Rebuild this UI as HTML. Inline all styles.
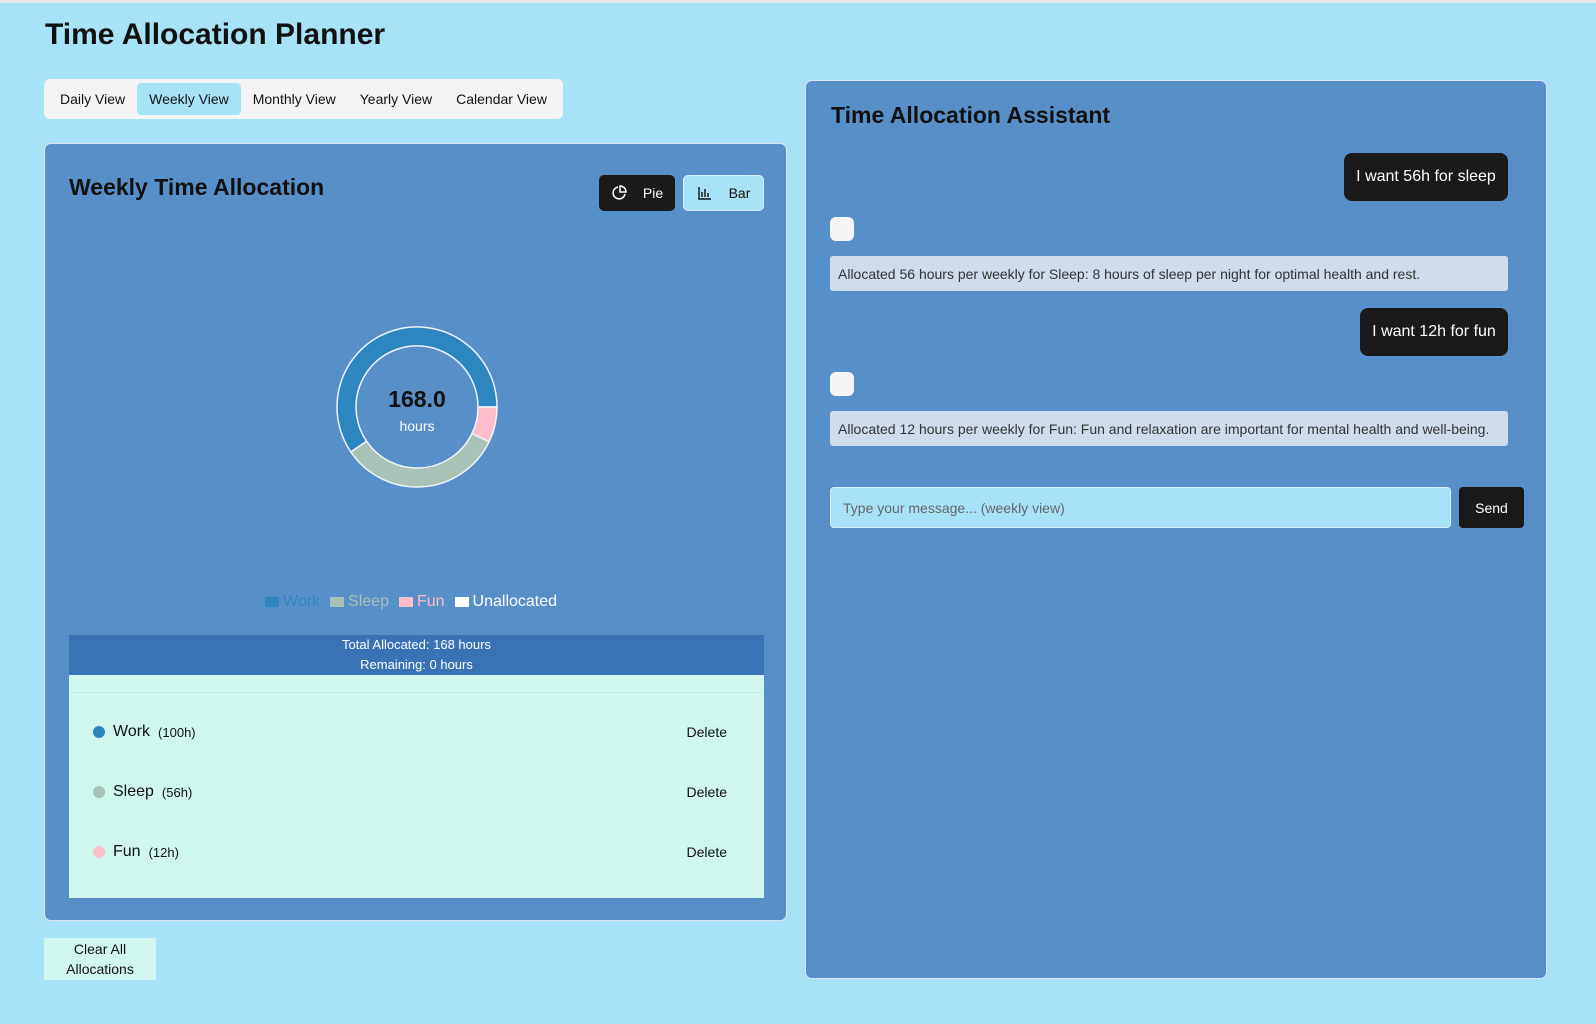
<!DOCTYPE html>
<html><head><meta charset="utf-8"><style>
*{box-sizing:border-box;margin:0;padding:0}
body{width:1596px;height:1024px;background:#a6e3f6;font-family:"Liberation Sans",Arial,sans-serif;position:relative;overflow:hidden;color:#111}
.abs{position:absolute}
h1{position:absolute;left:45px;top:18px;font-size:30px;font-weight:bold;color:#111}
.tabs{left:44px;top:79px;width:519px;height:40px;background:#f4f4f4;border-radius:6px;display:flex;align-items:center;padding-left:4px}
.tab{font-size:14px;padding:8px 12px;border-radius:4px;margin-right:0}
.tab.on{background:#a6e3f6}
.panel{background:#5790c9;border:1px solid #d8e6f2;border-radius:7px}
.btn{border-radius:5px;font-size:14px;display:flex;align-items:center;justify-content:center;gap:16px}
.row{position:absolute;left:24px;right:37px;display:flex;align-items:center;font-size:16px}
.dot{width:12px;height:12px;border-radius:50%;margin-right:8px}
.row small{font-size:13px;margin-left:8px}
.row .del{margin-left:auto;font-size:14px}
.bub{background:#1a1a1a;color:#fff;border-radius:8px;font-size:16px;display:flex;align-items:center;justify-content:center}
.bot{background:#cfdcec;border-radius:3px;font-size:14px;color:#333;padding-left:8px;display:flex;align-items:center}
.sq{width:24px;height:24px;background:#f5f5f5;border-radius:6px}
</style></head><body>
<div class="abs" style="left:0;top:0;width:1596px;height:3px;background:#e6e6e6"></div>
<h1>Time Allocation Planner</h1>
<div class="abs tabs"><span class="tab">Daily View</span><span class="tab on">Weekly View</span><span class="tab">Monthly View</span><span class="tab">Yearly View</span><span class="tab">Calendar View</span></div>

<div class="abs panel" style="left:44px;top:143px;width:743px;height:778px">
 <div class="abs" style="left:24px;top:30px;font-size:23px;font-weight:bold">Weekly Time Allocation</div>
 <div class="abs btn" style="left:554px;top:31px;width:76px;height:36px;background:#1a1a1a;color:#fff">
  <svg width="16" height="16" viewBox="0 0 16 16" fill="none" stroke="#fff" stroke-width="1.5"><path d="M14 9A6 6 0 1 1 7 2"/><path d="M9 1v6h6A6 6 0 0 0 9 1z"/></svg><span>Pie</span></div>
 <div class="abs btn" style="left:638px;top:31px;width:81px;height:36px;background:#a6e3f6;border:1px solid #d8eef8">
  <svg width="16" height="16" viewBox="0 0 16 16" fill="none" stroke="#111" stroke-width="1.4"><path d="M2 2v12h12M5 12V7M8 12V4M11 12V8"/></svg><span>Bar</span></div>
 <svg class="abs" style="left:0;top:0" width="743" height="500">
  <g transform="translate(-44,-143)" stroke="#eef4fa" stroke-width="1.5">
   <path d="M496,406 A80,80 0 1 0 349.9,451 L365.6,440.3 A61,61 0 1 1 477,406 Z" fill="#2e86c1"/>
   <path d="M349.9,451 A80,80 0 0 0 488.1,440.7 L471,432.5 A61,61 0 0 1 365.6,440.3 Z" fill="#a8c2b8"/>
   <path d="M488.1,440.7 A80,80 0 0 0 496,406 L477,406 A61,61 0 0 1 471,432.5 Z" fill="#ffbccb"/>
  </g>
 </svg>
 <div class="abs" style="left:272px;top:242px;width:200px;text-align:center;font-size:23px;font-weight:bold">168.0</div>
 <div class="abs" style="left:272px;top:274px;width:200px;text-align:center;font-size:14px;color:#fff">hours</div>
 <div class="abs" style="left:220px;top:449px;font-size:16px;display:flex;align-items:center;gap:4px">
  <span style="width:14px;height:10px;background:#2e86c1;display:inline-block"></span><span style="color:#2e86c1">Work</span>
  <span style="width:14px;height:10px;background:#a8c2b8;display:inline-block;margin-left:6px"></span><span style="color:#a8c2b8">Sleep</span>
  <span style="width:14px;height:10px;background:#ffbccb;display:inline-block;margin-left:6px"></span><span style="color:#ffbccb">Fun</span>
  <span style="width:14px;height:10px;background:#fff;display:inline-block;margin-left:6px"></span><span style="color:#fff">Unallocated</span>
 </div>
 <div class="abs" style="left:24px;top:491px;width:695px;height:40px;background:#3773b5;color:#fff;font-size:13px;text-align:center;line-height:20px">Total Allocated: 168 hours<br>Remaining: 0 hours</div>
 <div class="abs" style="left:24px;top:531px;width:695px;height:223px;background:#cff7ee">
  <div class="abs" style="left:0;right:0;top:17px;border-top:1px solid #c2ebe3"></div>
  <div class="row" style="top:48px"><span class="dot" style="background:#2e86c1"></span>Work<small>(100h)</small><span class="del">Delete</span></div>
  <div class="row" style="top:108px"><span class="dot" style="background:#a8c2b8"></span>Sleep<small>(56h)</small><span class="del">Delete</span></div>
  <div class="row" style="top:168px"><span class="dot" style="background:#ffbccb"></span>Fun<small>(12h)</small><span class="del">Delete</span></div>
 </div>
</div>
<div class="abs" style="left:44px;top:938px;width:112px;height:42px;background:#cff7ee;font-size:14px;text-align:center;line-height:20px;padding-top:1px">Clear All<br>Allocations</div>

<div class="abs panel" style="left:805px;top:80px;width:742px;height:899px">
 <div class="abs" style="left:25px;top:21px;font-size:23px;font-weight:bold">Time Allocation Assistant</div>
 <div class="abs bub" style="left:538px;top:72px;width:164px;height:48px">I want 56h for sleep</div>
 <div class="abs sq" style="left:24px;top:136px"></div>
 <div class="abs bot" style="left:24px;top:175px;width:678px;height:35px">Allocated 56 hours per weekly for Sleep: 8 hours of sleep per night for optimal health and rest.</div>
 <div class="abs bub" style="left:554px;top:227px;width:148px;height:48px">I want 12h for fun</div>
 <div class="abs sq" style="left:24px;top:291px"></div>
 <div class="abs bot" style="left:24px;top:330px;width:678px;height:35px">Allocated 12 hours per weekly for Fun: Fun and relaxation are important for mental health and well-being.</div>
 <div class="abs" style="left:24px;top:406px;width:621px;height:41px;background:#a6e3f6;border:1px solid #d8eef8;border-radius:4px;font-size:14px;color:#666;padding-left:12px;display:flex;align-items:center">Type your message... (weekly view)</div>
 <div class="abs bub" style="left:653px;top:406px;width:65px;height:41px;border-radius:4px;font-size:14px">Send</div>
</div>
</body></html>
